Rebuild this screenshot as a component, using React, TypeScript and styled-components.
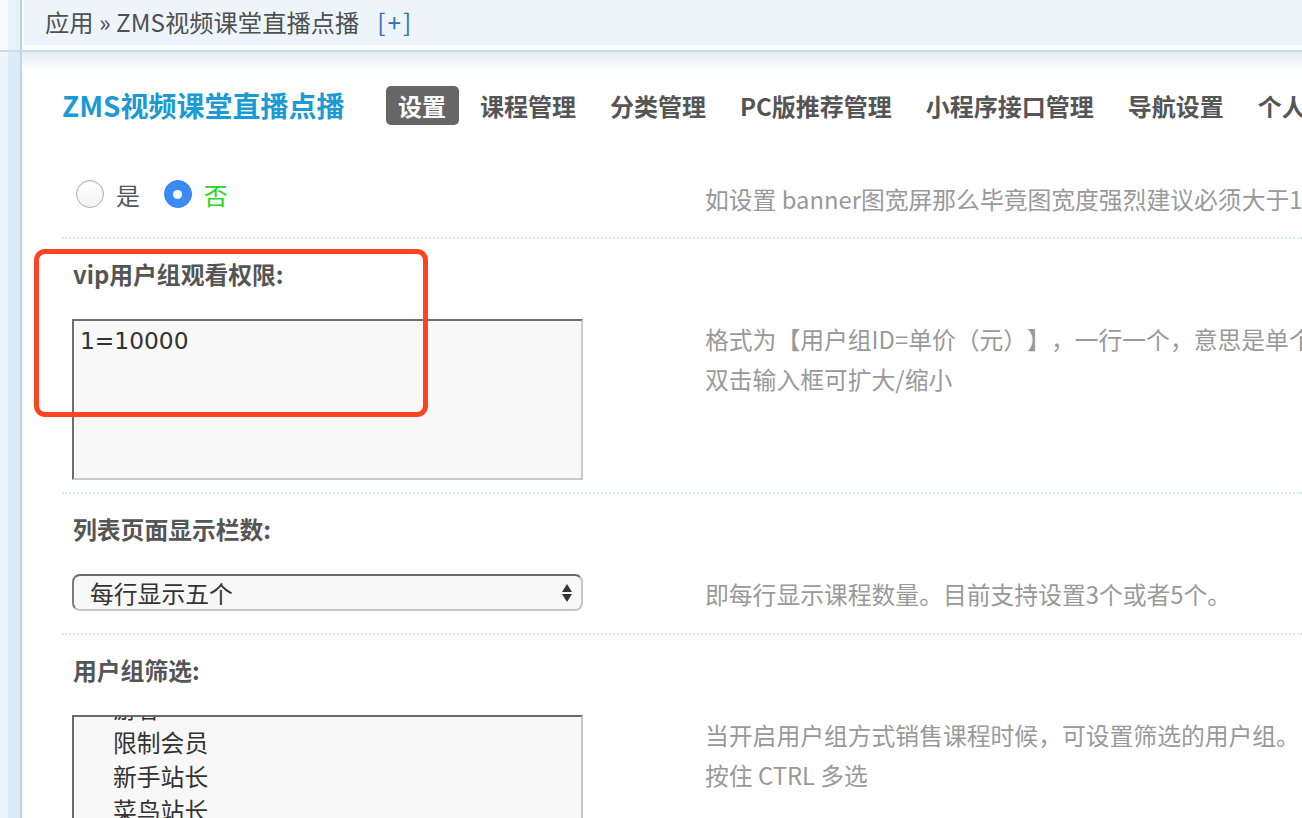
import React, { useLayoutEffect, useRef } from "react";
import styled, { createGlobalStyle, css } from "styled-components";

const Global = createGlobalStyle`
  html, body { margin: 0; padding: 0; background: #fff; }
  body {
    font-family: "Noto Sans CJK SC", "Liberation Sans", sans-serif;
    text-spacing-trim: space-all;
    overflow: hidden;
  }
  * { box-sizing: border-box; }
`;

const Page = styled.div`
  position: relative;
  display: flex;
  width: 1302px;
  height: 818px;
  overflow: hidden;
`;

const Sidebar = styled.aside`
  flex: 0 0 22px;
  display: flex;
  flex-direction: column;
  border-right: 2px solid #bfd4df;
  background: linear-gradient(to right, #eef6fb 0 8px, #dcebf5 8px 20px);
`;

const SideTop = styled.div`
  height: 52px;
  border-bottom: 2px solid #c9dce5;
  background: linear-gradient(to right, #f8fbfd 0 8px, #e8f2f9 8px);
`;

const Main = styled.main`
  flex: 1;
  min-width: 0;
  display: flex;
  flex-direction: column;
`;

const CrumbWrap = styled.div`
  padding: 0 0 5px 2px;
  background: #fafdfe;
  border-bottom: 2px solid #c9dce5;
`;

const Crumb = styled.div`
  height: 45px;
  display: flex;
  align-items: center;
  padding: 0 0 3px 21px;
  background: #eef5fa;
  font-size: 24.3px;
  color: #505050;
  white-space: nowrap;
`;

const CrumbAdd = styled.span`
  margin-left: 18px;
  letter-spacing: 2px;
  color: #3170b6;
`;

const Content = styled.div`
  flex: 1;
  padding: 34px 0 0 40px;
  background: linear-gradient(#e3eef6, #fff 20px);
`;

const Nav = styled.nav`
  display: flex;
  align-items: center;
  height: 39px;
`;

const Title = styled.h1`
  margin: 0 41px 0 0;
  font-size: 28px;
  font-weight: 700;
  line-height: 39px;
  color: #1b9ad3;
  white-space: nowrap;
`;

const Tabs = styled.div`
  display: flex;
  gap: 9px;
`;

const Tab = styled.a<{ $active?: boolean }>`
  display: block;
  height: 39px;
  padding: 0 12.5px;
  line-height: 39px;
  font-size: 24px;
  font-weight: 700;
  color: #555;
  white-space: nowrap;
  border-radius: 5px;
  ${(p) =>
    p.$active &&
    css`
      background: #666;
      color: #fff;
    `}
`;

const Form = styled.div`
  margin-top: 54px;
`;

const FormRow = styled.div<{ $pt: number; $pb: number }>`
  padding: ${(p) => p.$pt}px 0 ${(p) => p.$pb}px;
  border-bottom: 2px dotted #d5e7f3;
`;

const Label = styled.div`
  padding-left: 11px;
  margin-bottom: 25.5px;
  font-size: 23.8px;
  font-weight: 700;
  line-height: 41px;
  color: #555;
  white-space: nowrap;
`;

const Field = styled.div`
  display: grid;
  grid-template-columns: 643px 1fr;
  align-items: start;
`;

const Control = styled.div`
  padding-left: 10px;
`;

const Desc = styled.div`
  font-size: 23.8px;
  line-height: 40px;
  color: #999;
  white-space: nowrap;
`;

const RadioGroup = styled.div`
  display: flex;
  align-items: center;
  height: 30px;
  padding-left: 14px;
`;

const RadioDot = styled.span<{ $checked?: boolean }>`
  position: relative;
  flex: 0 0 28px;
  width: 28px;
  height: 28px;
  border-radius: 50%;
  ${(p) =>
    p.$checked
      ? css`
          background: #3b8bf6;
          border: 1px solid #3581ea;
          &::after {
            content: "";
            position: absolute;
            left: 50%;
            top: 50%;
            width: 9px;
            height: 9px;
            margin: -4.5px 0 0 -4.5px;
            border-radius: 50%;
            background: #fff;
          }
        `
      : css`
          background: linear-gradient(#fff, #f2f2f2);
          border: 1px solid #aeaeae;
          box-shadow: inset 0 1px 1px rgba(0, 0, 0, 0.08);
        `}
`;

const RadioText = styled.span<{ $green?: boolean; $gap: number }>`
  margin-left: 12px;
  margin-right: ${(p) => p.$gap}px;
  font-size: 23.8px;
  color: ${(p) => (p.$green ? "#1fd91f" : "#555")};
`;

const TextArea = styled.textarea`
  display: block;
  width: 511px;
  height: 161px;
  margin: 0;
  padding: 5px 6px 4px;
  border: 2px solid;
  border-color: #6e6e6e #c9c9c9 #c9c9c9 #6e6e6e;
  background: #f8f8f8;
  font-family: "DejaVu Sans", "Noto Sans CJK SC", sans-serif;
  font-size: 23.3px;
  line-height: 29px;
  color: #333;
  resize: none;
  outline: none;
`;

const SelectBox = styled.div`
  display: flex;
  align-items: center;
  justify-content: space-between;
  width: 511px;
  height: 37px;
  padding: 0 9px 0 16px;
  border: 2px solid;
  border-color: #6a6a6a #c6c6c6 #c6c6c6 #7a7a7a;
  border-radius: 8px;
  background: #f8f8f8;
  font-size: 23.8px;
  color: #333;
`;

const ListBox = styled.div`
  width: 511px;
  height: 120px;
  border: 2px solid;
  border-color: #6a6a6a #c8c8c8 transparent #6a6a6a;
  border-bottom: none;
  background: #f8f8f8;
  overflow: hidden;
`;

const Option = styled.div`
  padding-left: 39px;
  font-size: 23.8px;
  line-height: 34px;
  color: #333;
  white-space: nowrap;
`;

const Annotation = styled.div`
  position: absolute;
  left: 33.5px;
  top: 249.3px;
  width: 394px;
  height: 167.5px;
  border: 5px solid #fd4421;
  border-radius: 11px;
  pointer-events: none;
`;

const groups = ["游客", "限制会员", "新手站长", "菜鸟站长", "冒泡站长", "小有名气", "资深站长"];

const tabs = ["设置", "课程管理", "分类管理", "PC版推荐管理", "小程序接口管理", "导航设置", "个人中心设置"];

function SelectArrows() {
  return (
    <svg width="10" height="18" viewBox="0 0 10 18">
      <polygon points="0,8 5,0 10,8" fill="#333" />
      <polygon points="0,10 10,10 5,18" fill="#333" />
    </svg>
  );
}

export default function App() {
  const listRef = useRef<HTMLDivElement>(null);
  useLayoutEffect(() => {
    if (listRef.current) listRef.current.scrollTop = 34 - 8;
  }, []);

  return (
    <>
      <Global />
      <Page>
        <Sidebar>
          <SideTop />
        </Sidebar>
        <Main>
          <CrumbWrap>
            <Crumb>
              应用 » ZMS视频课堂直播点播
              <CrumbAdd>[+]</CrumbAdd>
            </Crumb>
          </CrumbWrap>
          <Content>
            <Nav>
              <Title>ZMS视频课堂直播点播</Title>
              <Tabs>
                {tabs.map((t, i) => (
                  <Tab key={t} $active={i === 0}>
                    {t}
                  </Tab>
                ))}
              </Tabs>
            </Nav>
            <Form>
              <FormRow $pt={0} $pb={18}>
                <Field>
                  <RadioGroup>
                    <RadioDot />
                    <RadioText $gap={24}>是</RadioText>
                    <RadioDot $checked />
                    <RadioText $green $gap={0}>
                      否
                    </RadioText>
                  </RadioGroup>
                  <Desc>如设置 banner图宽屏那么毕竟图宽度强烈建议必须大于1200px</Desc>
                </Field>
              </FormRow>
              <FormRow $pt={13.5} $pb={12}>
                <Label>vip用户组观看权限:</Label>
                <Field>
                  <Control>
                    <TextArea defaultValue="1=10000" />
                  </Control>
                  <div>
                    <Desc>格式为【用户组ID=单价（元）】，一行一个，意思是单个用户组观看的价格</Desc>
                    <Desc>双击输入框可扩大/缩小</Desc>
                  </div>
                </Field>
              </FormRow>
              <FormRow $pt={13.5} $pb={19}>
                <Label>列表页面显示栏数:</Label>
                <Field>
                  <Control>
                    <SelectBox>
                      <span>每行显示五个</span>
                      <SelectArrows />
                    </SelectBox>
                  </Control>
                  <Desc>即每行显示课程数量。目前支持设置3个或者5个。</Desc>
                </Field>
              </FormRow>
              <FormRow $pt={13.5} $pb={0}>
                <Label>用户组筛选:</Label>
                <Field>
                  <Control>
                    <ListBox ref={listRef}>
                      {groups.map((g) => (
                        <Option key={g}>{g}</Option>
                      ))}
                    </ListBox>
                  </Control>
                  <div>
                    <Desc>当开启用户组方式销售课程时候，可设置筛选的用户组。</Desc>
                    <Desc>按住 CTRL 多选</Desc>
                  </div>
                </Field>
              </FormRow>
            </Form>
          </Content>
        </Main>
        <Annotation />
      </Page>
    </>
  );
}
